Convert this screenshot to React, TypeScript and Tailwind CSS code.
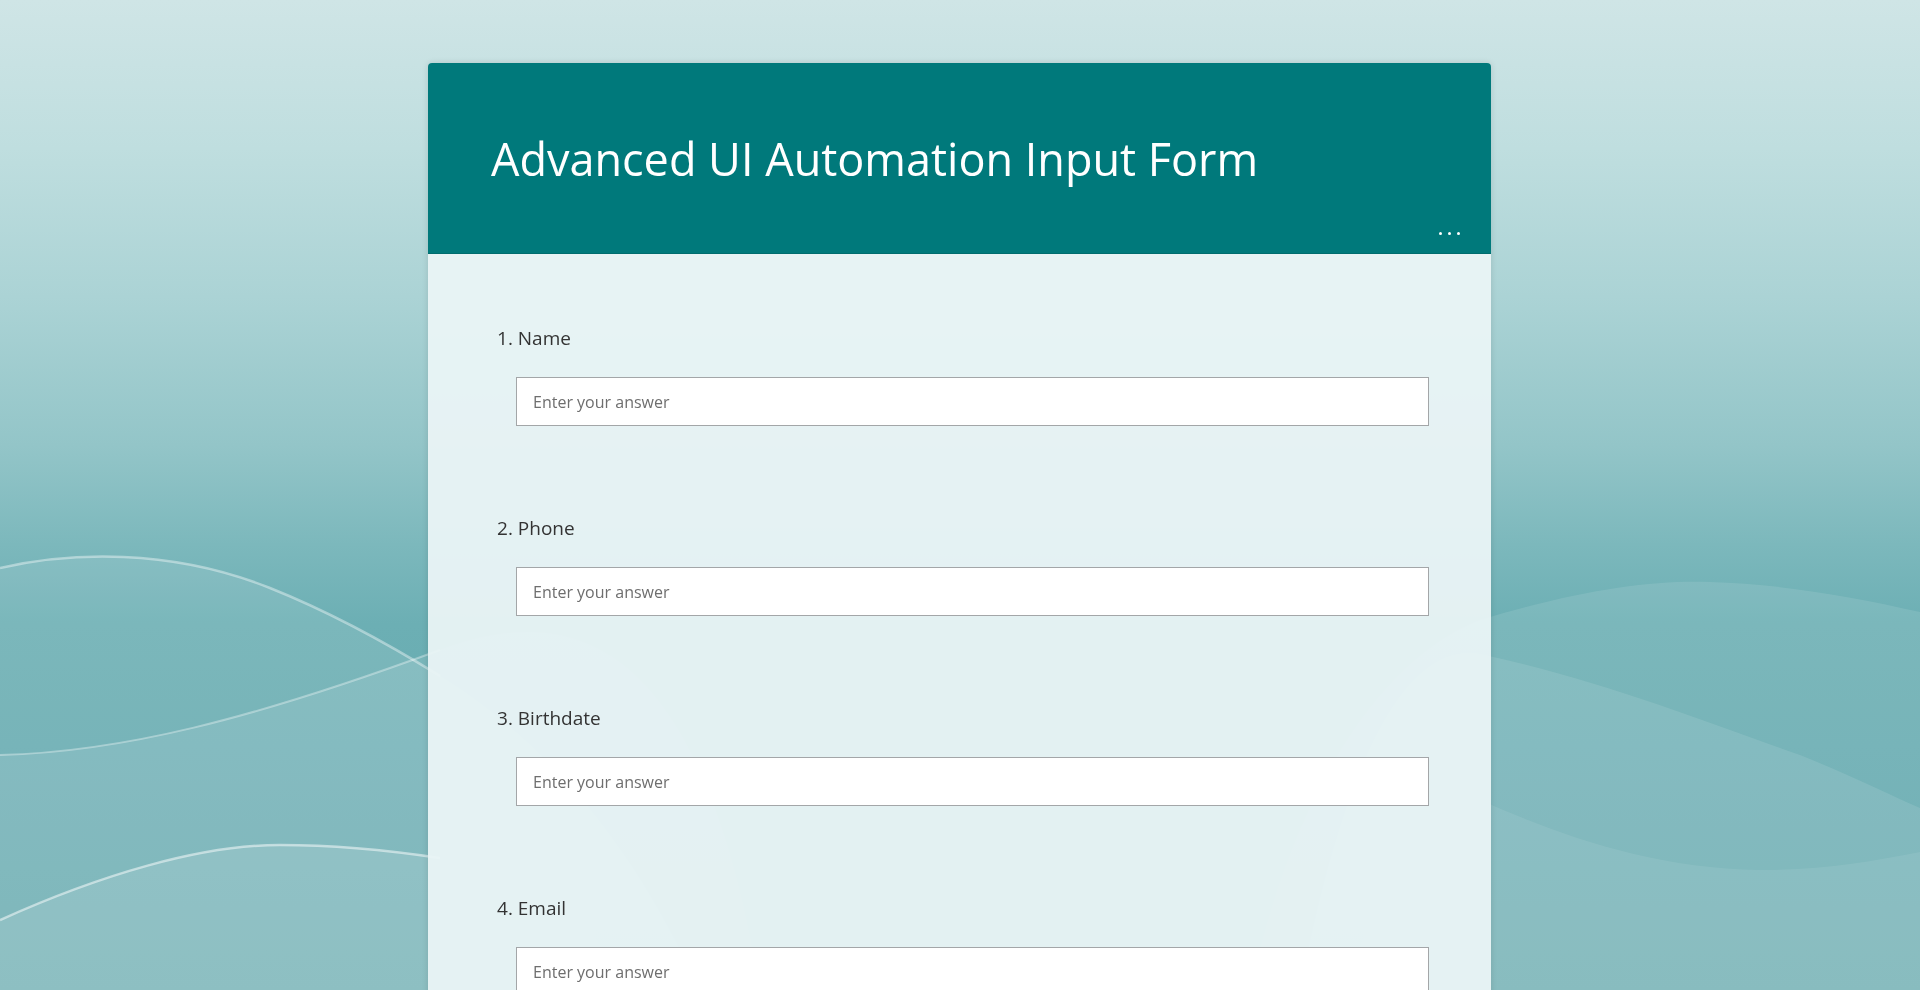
import { useState } from 'react';

const questions = ['Name', 'Phone', 'Birthdate', 'Email'];

function Waves() {
  return (
    <svg
      className="fixed inset-0 w-full h-full"
      viewBox="0 0 1920 990"
      preserveAspectRatio="none"
    >
      <defs>
        <linearGradient id="sky" x1="0" y1="0" x2="0" y2="1">
          <stop offset="0" stopColor="#cfe5e6" />
          <stop offset="0.15" stopColor="#bfdedf" />
          <stop offset="0.3" stopColor="#abd3d5" />
          <stop offset="0.45" stopColor="#93c5c8" />
          <stop offset="0.55" stopColor="#7cb8bc" />
          <stop offset="0.63" stopColor="#6cafb4" />
          <stop offset="1" stopColor="#60a6ab" />
        </linearGradient>
      </defs>
      <rect width="1920" height="990" fill="url(#sky)" />

      {/* left side */}
      <path d="M0,568 C70,552 170,548 270,588 C330,612 390,645 440,676 C560,750 640,860 700,990 L0,990 Z" fill="#ffffff" fillOpacity="0.1" />
      <path d="M0,568 C70,552 170,548 270,588 C330,612 390,645 440,676" fill="none" stroke="#ffffff" strokeOpacity="0.4" strokeWidth="2.5" />
      <path d="M0,755 C120,752 250,720 440,650 C560,605 700,620 760,990 L0,990 Z" fill="#ffffff" fillOpacity="0.1" />
      <path d="M0,755 C120,752 250,720 440,650" fill="none" stroke="#ffffff" strokeOpacity="0.35" strokeWidth="2" />
      <path d="M0,920 C100,875 200,845 280,845 C340,845 400,852 440,858 C560,875 600,930 620,990 L0,990 Z" fill="#ffffff" fillOpacity="0.12" />
      <path d="M0,920 C100,875 200,845 280,845 C340,845 400,852 440,858" fill="none" stroke="#ffffff" strokeOpacity="0.5" strokeWidth="2.5" />

      {/* right side */}
      <path d="M1250,990 C1300,760 1400,650 1480,620 C1580,590 1650,580 1710,582 C1780,584 1850,596 1920,612 L1920,990 Z" fill="#ffffff" fillOpacity="0.1" />
      <path d="M1300,990 C1340,780 1400,640 1480,654 C1600,680 1700,720 1800,755 C1850,775 1890,795 1920,808 L1920,990 Z" fill="#ffffff" fillOpacity="0.1" />
      <path d="M1350,990 C1380,860 1420,775 1480,800 C1560,835 1650,868 1760,870 C1820,870 1870,862 1920,852 L1920,990 Z" fill="#ffffff" fillOpacity="0.08" />
    </svg>
  );
}

export default function App() {
  const [answers, setAnswers] = useState<Record<string, string>>({});

  return (
    <div className="relative min-h-screen" style={{ fontFamily: '"Open Sans", "Noto Sans", sans-serif' }}>
      <Waves />

      <div className="relative pt-[63px] pb-[47px]">
        <div className="ml-[428px] w-[1063px] rounded-[4px] shadow-[0_0_6px_rgba(0,0,0,0.12)]">
          {/* header */}
          <div className="h-[191px] flex flex-col bg-[#00797b] rounded-t-[4px] border-b border-[#006c6e]">
            <h1 className="pt-[68px] pl-[63px] text-[45px] leading-[56px] font-normal text-white">
              Advanced UI Automation Input Form
            </h1>
            <div className="mt-auto flex justify-end gap-[6px] pr-[31px] pb-[18px]">
              <span className="w-[3px] h-[3px] rounded-full bg-white" />
              <span className="w-[3px] h-[3px] rounded-full bg-white" />
              <span className="w-[3px] h-[3px] rounded-full bg-white" />
            </div>
          </div>

          {/* body */}
          <div className="bg-[#eaf4f5]/[0.95] pt-[70px] pb-[60px] rounded-b-[4px]">
            {questions.map((q, i) => (
              <div key={q} className="mb-[88px]">
                <div className="pl-[69px] text-[19px] leading-[28px] text-[#333333]">
                  {i + 1}. {q}
                </div>
                <input
                  value={answers[q] ?? ''}
                  onChange={(e) => setAnswers({ ...answers, [q]: e.target.value })}
                  placeholder="Enter your answer"
                  className="block mt-[25px] ml-[88px] w-[913px] h-[49px] pl-4 bg-white border border-[#a3a6a8] text-[16px] text-[#323130] placeholder:text-[#6e6e6e] outline-none"
                />
              </div>
            ))}
            <div className="pl-[69px]">
              <button className="px-8 h-[40px] bg-[#00797b] text-white text-[16px] rounded-[2px]">
                Submit
              </button>
            </div>
          </div>
        </div>
      </div>
    </div>
  );
}
